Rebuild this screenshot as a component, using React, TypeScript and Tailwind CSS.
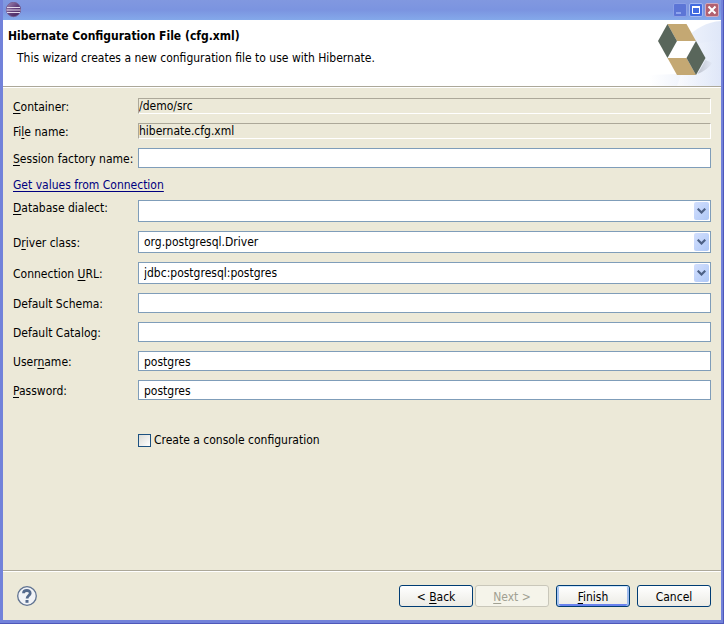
import type { ReactNode } from "react";

const fieldBorder = "border border-[#7f9db9] bg-white";

function Key({ children }: { children: ReactNode }) {
  return <span className="underline underline-offset-2">{children}</span>;
}

function Label({ id, top, children }: { id: string; top?: boolean; children: ReactNode }) {
  return (
    <label
      htmlFor={id}
      className={"-mb-0.5 whitespace-nowrap leading-4 " + (top ? "self-start" : "self-center")}
    >
      {children}
    </label>
  );
}

function ReadOnlyField({ id, value }: { id: string; value: string }) {
  return (
    <input
      id={id}
      readOnly
      value={value}
      className="h-4 w-full min-w-0 border border-t-[#aca899] border-r-white border-b-white border-l-[#aca899] bg-[#ece9d8] leading-3 outline-none"
    />
  );
}

function TextField({ id, value }: { id: string; value?: string }) {
  return (
    <input
      id={id}
      defaultValue={value}
      className={"h-5 w-full min-w-0 px-[5px] pt-0.5 outline-none " + fieldBorder}
    />
  );
}

function Combo({ id, value }: { id: string; value: string }) {
  return (
    <div className="relative">
      <select
        id={id}
        defaultValue={value}
        className={"block h-[22px] w-full appearance-none pr-5 pl-[5px] outline-none " + fieldBorder}
      >
        <option value={value}>{value}</option>
      </select>
      <span className="pointer-events-none absolute top-0.5 right-0.5 flex h-[18px] w-[15px] items-center justify-center rounded-xs bg-linear-to-br from-[#d3dffd] to-[#aec8f7]">
        <svg width="9" height="6" viewBox="0 0 9 6" fill="none" stroke="#4d6185" strokeWidth="2.2" aria-hidden="true">
          <path d="M0.7 0.7 4.5 4.5 8.3 0.7" />
        </svg>
      </span>
    </div>
  );
}

function EclipseIcon() {
  return (
    <svg width="16" height="16" viewBox="0 0 16 16" aria-hidden="true">
      <defs>
        <linearGradient id="ball" x1="0" y1="0" x2="1" y2="1">
          <stop offset="0" stopColor="#a78cb5" />
          <stop offset="0.5" stopColor="#62407b" />
          <stop offset="1" stopColor="#43235c" />
        </linearGradient>
      </defs>
      <circle cx="8.500" cy="7.500" r="7.2" fill="url(#ball)" stroke="#765a8d" strokeWidth="0.8" />
      <path d="M2 5.500h13M1.500 8h14M2 10.500h13" stroke="#e3d9ec" strokeWidth="1" />
    </svg>
  );
}

function HibernateLogo() {
  return (
    <svg width="74" height="66" viewBox="0 0 74 66" aria-hidden="true">
      <defs>
        <linearGradient id="sky" x1="0" y1="0" x2="1" y2="0">
          <stop offset="0" stopColor="#ffffff" />
          <stop offset="1" stopColor="#dfe7f8" />
        </linearGradient>
        <linearGradient id="shade" x1="0" y1="0" x2="1" y2="0">
          <stop offset="0" stopColor="#bfc4cf" />
          <stop offset="1" stopColor="#e3e9f7" />
        </linearGradient>
      </defs>
      <path d="M38 20C48 8 60 2 74 1V66H2V55L30 54Z" fill="url(#sky)" />
      <path d="M44 26C54 22 64 21 74 21V66H30Z" fill="url(#sky)" opacity="0.5" />
      <g transform="translate(2.500 0)">
        <path d="M48 54 56 40 63 43Q58 50 48 54Z" fill="url(#shade)" />
        <path d="M27 21H46L37 38H18Z" fill="#fff" />
        <path d="M18 4H37L46.500 21H27.500Z" fill="#c4a873" />
        <path d="M18 4 27.500 21 18 38 8.500 21Z" fill="#59665b" />
        <path d="M18 38H37L46.500 55H27.500Z" fill="#c4a873" />
        <path d="M46.500 21 56 38 46.500 55 37 38Z" fill="#59665b" />
      </g>
    </svg>
  );
}

const captionButton = "flex h-3.5 w-3.5 items-center justify-center rounded-xs border";

function TitleBar() {
  return (
    <div className="flex h-5 items-center justify-between bg-linear-to-b from-[#8198e0] via-[#7b94e0] to-[#84a9ea] px-0.5">
      <EclipseIcon />
      <div className="flex gap-0.5">
        <button aria-label="Minimize" className={captionButton + " border-[#8ba0e6] bg-[#5c75d6]"}>
          <svg width="12" height="12" viewBox="0 0 12 12" aria-hidden="true">
            <path d="M2 9H7" stroke="#90a6ee" strokeWidth="2" />
          </svg>
        </button>
        <button aria-label="Maximize" className={captionButton + " border-[#a5b9f0] bg-[#426be0]"}>
          <svg width="12" height="12" viewBox="0 0 12 12" aria-hidden="true">
            <path d="M2.500 3.500H9.500V9.500H2.500Z" fill="none" stroke="#fff" />
            <path d="M2 3H10" stroke="#fff" strokeWidth="2" />
          </svg>
        </button>
        <button aria-label="Close" className={captionButton + " border-[#d0a9bd] bg-[#b2606f]"}>
          <svg width="12" height="12" viewBox="0 0 12 12" aria-hidden="true">
            <path d="M2.500 2.500 9.500 9.500M9.500 2.500 2.500 9.500" stroke="#fff" strokeWidth="2" />
          </svg>
        </button>
      </div>
    </div>
  );
}

const pushButton =
  "h-[22px] w-[74px] rounded-[3px] border border-[#003c74] bg-linear-to-b from-white to-[#ecebe5] pt-0.5";

export default function App() {
  return (
    <div className="flex min-h-screen flex-col border-r border-b border-[#4e58ba] font-['DejaVu_Sans_Condensed','DejaVu_Sans',sans-serif] text-[12px] leading-4 text-black">
      <div className="flex flex-1 flex-col border-r-2 border-b-3 border-l-3 border-[#7282da] bg-[#ece9d8]">
        <TitleBar />
        <header className="flex h-[67px] justify-between border-b border-[#aca899] bg-white">
          <div className="pt-2 pl-[5px]">
            <h1 className="font-bold">Hibernate Configuration File (cfg.xml)</h1>
            <p className="mt-1.5 pl-[9px]">This wizard creates a new configuration file to use with Hibernate.</p>
          </div>
          <HibernateLogo />
        </header>
        <form
          className="flex flex-1 flex-col border-t border-white"
          onSubmit={(event) => event.preventDefault()}
        >
          <div className="grid grid-cols-[120px_minmax(0,1fr)] gap-x-[5px] gap-y-[9px] px-2.5 pt-2.5">
            <Label id="container"><Key>C</Key>ontainer:</Label>
            <ReadOnlyField id="container" value="/demo/src" />
            <Label id="file">Fi<Key>l</Key>e name:</Label>
            <ReadOnlyField id="file" value="hibernate.cfg.xml" />
            <Label id="session"><Key>S</Key>ession factory name:</Label>
            <TextField id="session" />
            <div className="col-span-2 h-3.5">
              <a href="#connection" className="text-[#000080] underline underline-offset-2">
                Get values from Connection
              </a>
            </div>
            <Label id="dialect" top><Key>D</Key>atabase dialect:</Label>
            <Combo id="dialect" value="" />
            <Label id="driver">D<Key>r</Key>iver class:</Label>
            <Combo id="driver" value="org.postgresql.Driver" />
            <Label id="url">Connection <Key>U</Key>RL:</Label>
            <Combo id="url" value="jdbc:postgresql:postgres" />
            <Label id="schema">Default Schema:</Label>
            <TextField id="schema" />
            <Label id="catalog">Default Catalog:</Label>
            <TextField id="catalog" />
            <Label id="user">User<Key>n</Key>ame:</Label>
            <TextField id="user" value="postgres" />
            <Label id="password"><Key>P</Key>assword:</Label>
            <TextField id="password" value="postgres" />
            <div className="col-start-2 mt-[23px] flex items-center gap-[3px]">
              <input
                id="console"
                type="checkbox"
                className="h-[13px] w-[13px] appearance-none border border-[#1c5180] bg-linear-to-br from-[#dcdcd7] to-white checked:bg-[#21a121]"
              />
              <label htmlFor="console">Create a console configuration</label>
            </div>
          </div>
          <footer className="mt-auto flex h-[50px] items-center justify-between border-t border-[#aca899] px-2.5 shadow-[inset_0_1px_0_#fff]">
            <button type="button" aria-label="Help" className="ml-1">
              <svg width="20" height="20" viewBox="0 0 20 20" fill="none" aria-hidden="true">
                <circle cx="10" cy="10" r="9.300" fill="#f1f3f7" stroke="#607391" strokeWidth="1.300" />
                <path d="M6.500 7.300C6.600 3.500 13.300 3.600 13.200 7.300C13.100 9.600 10.100 9.600 10.100 12.500" stroke="#546a8d" strokeWidth="2.800" />
                <path d="M8.500 14H11.500V16.800H8.500Z" fill="#546a8d" />
              </svg>
            </button>
            <div className="flex gap-[7px]">
              <div className="flex gap-0.5">
                <button type="button" className={pushButton}>&lt; <Key>B</Key>ack</button>
                <button
                  type="button"
                  disabled
                  className="h-[22px] w-[74px] rounded-[3px] border border-[#c9c7ba] bg-[#f5f4ea] pt-0.5 text-[#a1a192]"
                >
                  <Key>N</Key>ext &gt;
                </button>
              </div>
              <button
                type="submit"
                className={pushButton + " shadow-[inset_0_1px_0_#cee7ff,inset_2px_0_0_#a9c5f2,inset_-2px_0_0_#a0bcee,inset_0_-2px_0_#6982ee]"}
              >
                <Key>F</Key>inish
              </button>
              <button type="button" className={pushButton}>Cancel</button>
            </div>
          </footer>
        </form>
      </div>
    </div>
  );
}
